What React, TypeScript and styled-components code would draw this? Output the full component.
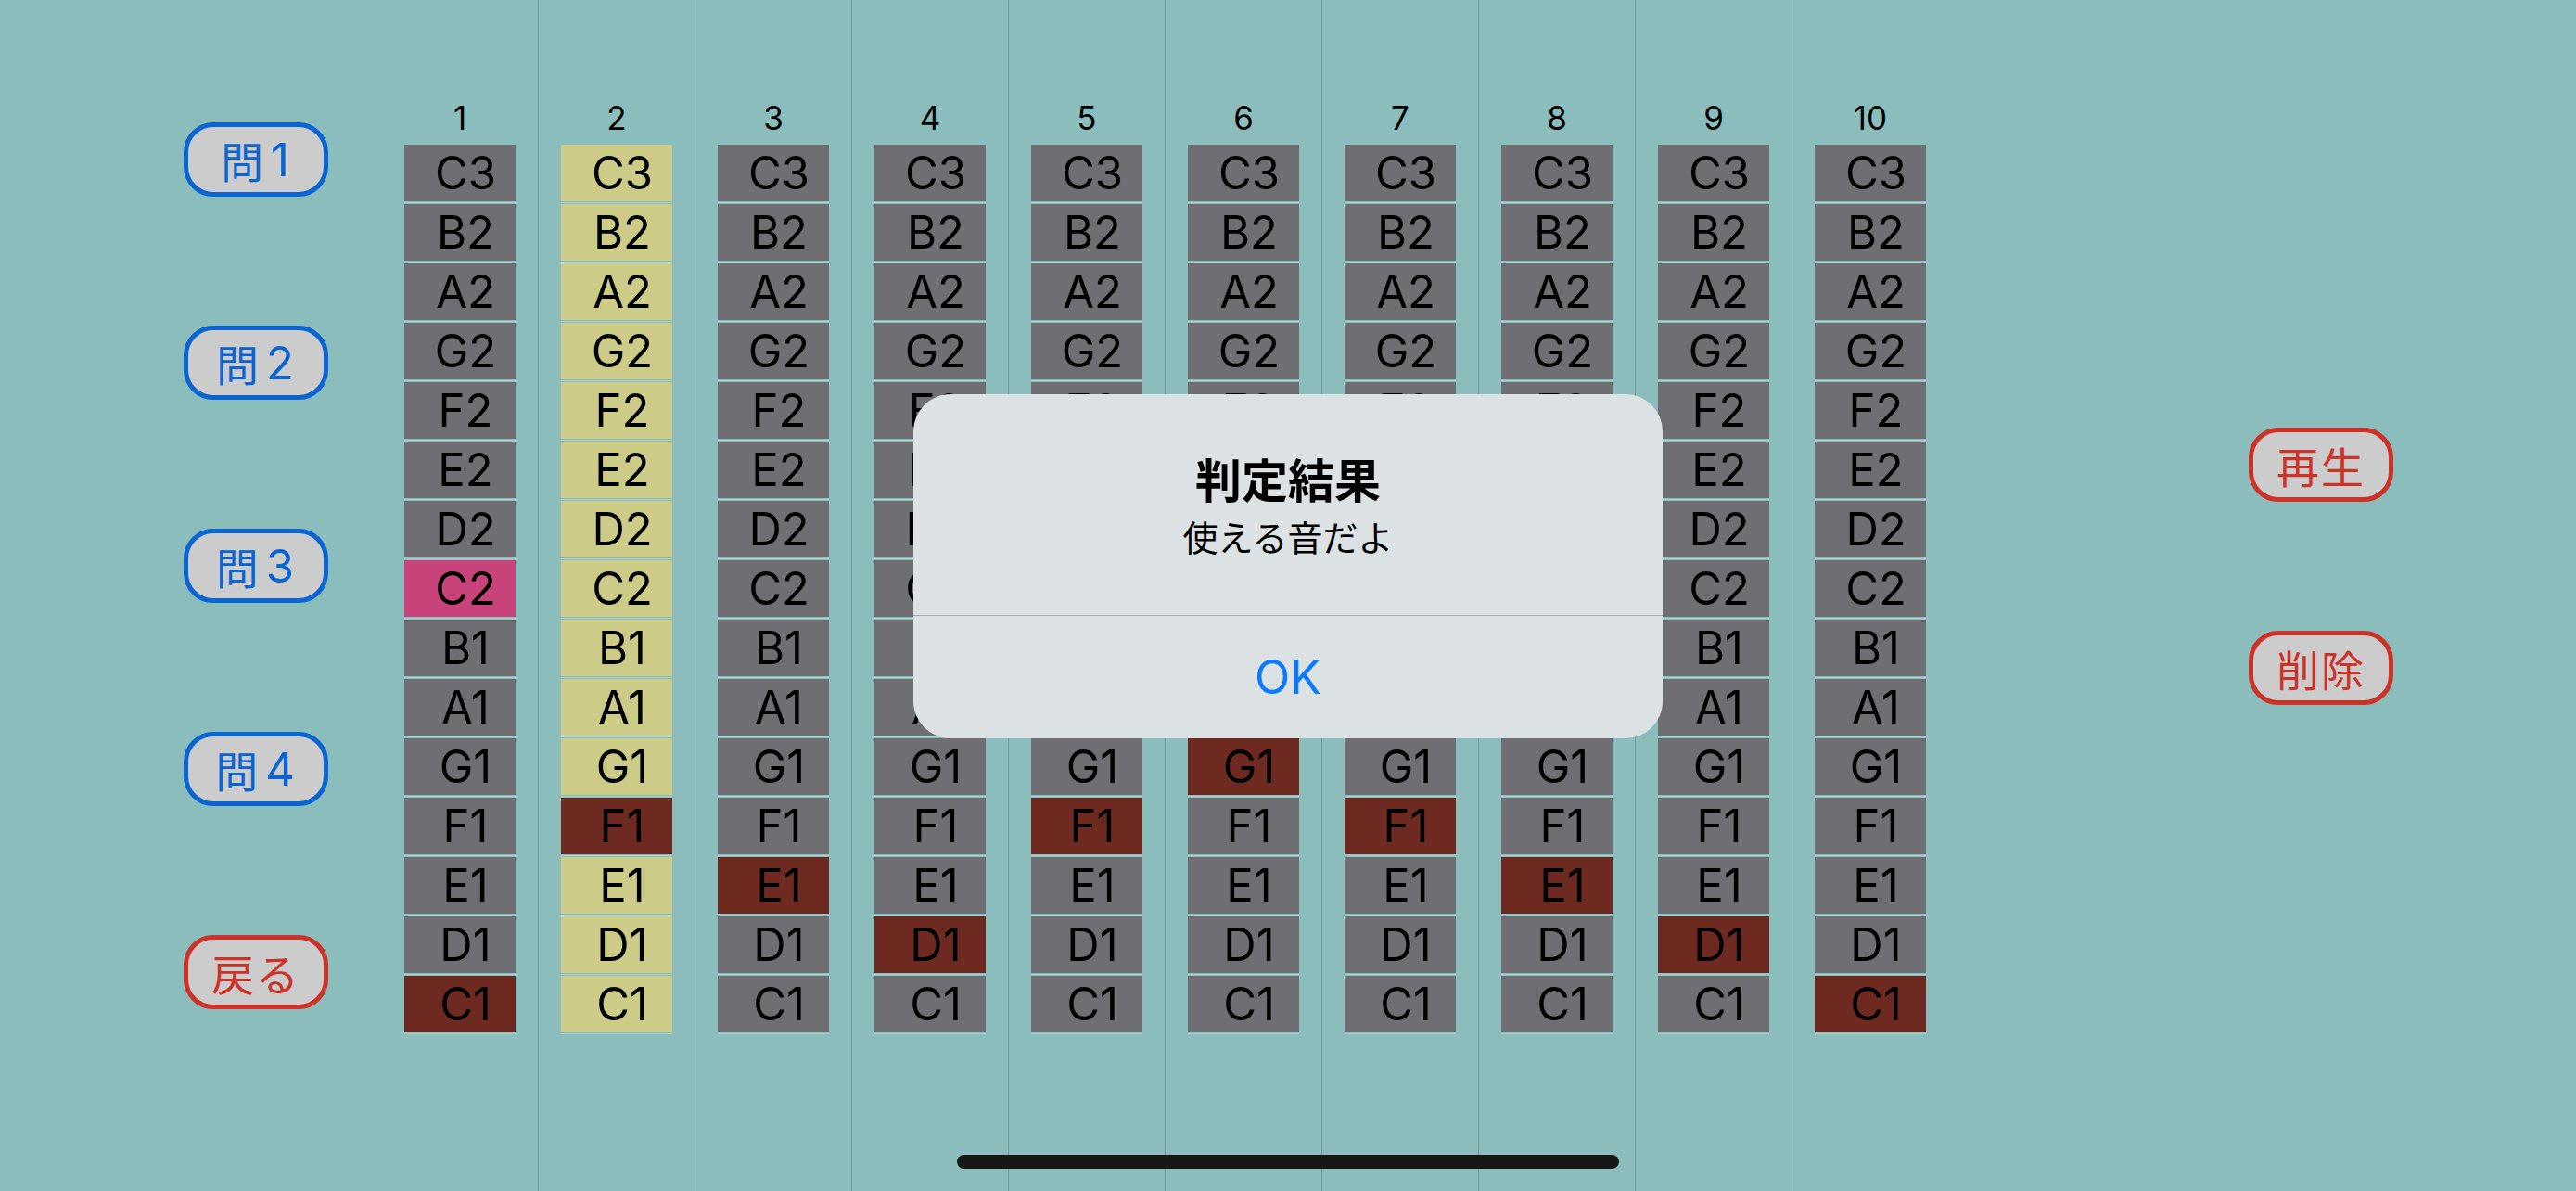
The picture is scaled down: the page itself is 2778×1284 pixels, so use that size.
import React from 'react';
import styled, { createGlobalStyle } from 'styled-components';

const GlobalStyle = createGlobalStyle`
  html, body {
    margin: 0;
    padding: 0;
    background: #8bbdbd;
  }
  body {
    font-family: Inter, "Noto Sans CJK JP", sans-serif;
  }
`;

const NOTES = ['C3', 'B2', 'A2', 'G2', 'F2', 'E2', 'D2', 'C2', 'B1', 'A1', 'G1', 'F1', 'E1', 'D1', 'C1'];

type Tone = 'gray' | 'yellow' | 'red' | 'pink';

interface ColumnData {
  label: string;
  base: Tone;
  marks: Record<string, Tone>;
}

const columns: ColumnData[] = [
  { label: '1', base: 'gray', marks: { C2: 'pink', C1: 'red' } },
  { label: '2', base: 'yellow', marks: { F1: 'red' } },
  { label: '3', base: 'gray', marks: { E1: 'red' } },
  { label: '4', base: 'gray', marks: { D1: 'red' } },
  { label: '5', base: 'gray', marks: { F1: 'red' } },
  { label: '6', base: 'gray', marks: { G1: 'red' } },
  { label: '7', base: 'gray', marks: { F1: 'red' } },
  { label: '8', base: 'gray', marks: { E1: 'red' } },
  { label: '9', base: 'gray', marks: { D1: 'red' } },
  { label: '10', base: 'gray', marks: { C1: 'red' } },
];

const toneColor: Record<Tone, string> = {
  gray: '#6f6e73',
  yellow: '#cccc88',
  red: '#6e2a20',
  pink: '#c8437a',
};

const Screen = styled.div`
  position: relative;
  width: 2778px;
  height: 1284px;
  overflow: hidden;
  display: flex;
  align-items: flex-start;
  background: #8bbdbd;
`;

const SideColumn = styled.div<{ $top: number; $left: number }>`
  display: flex;
  flex-direction: column;
  gap: 139px;
  padding-top: ${({ $top }) => $top}px;
  margin-left: ${({ $left }) => $left}px;
`;

const PillButton = styled.button<{ $tone: 'blue' | 'red' }>`
  box-sizing: border-box;
  width: 156px;
  height: 80px;
  border-radius: 32px;
  border: 5px solid ${({ $tone }) => ($tone === 'blue' ? '#0a64d2' : '#cd3229')};
  background: #cccccc;
  color: ${({ $tone }) => ($tone === 'blue' ? '#0a64d2' : '#cd3229')};
  font-family: "Noto Sans CJK JP", sans-serif;
  font-size: 46px;
  line-height: 1;
  padding: 0;
  display: flex;
  align-items: center;
  justify-content: center;
  letter-spacing: 2px;
`;

const ButtonNumber = styled.span`
  font-family: Inter, sans-serif;
  font-size: 49px;
  margin-left: 6px;
`;

const Board = styled.div`
  display: flex;
  margin-left: 58px;
  height: 1221px;
`;

const Column = styled.div<{ $divider: boolean }>`
  width: 168px;
  height: 100%;
  border-left: ${({ $divider }) => ($divider ? '1px solid #6e9c9e' : 'none')};
  display: flex;
  flex-direction: column;
  align-items: center;
  padding-top: 105px;
  box-sizing: content-box;
`;

const ColumnLabel = styled.div`
  height: 44px;
  line-height: 44px;
  font-family: Inter, sans-serif;
  font-size: 35px;
  color: #000;
  margin-bottom: 7px;
`;

const Slot = styled.div`
  width: 120px;
  height: 64px;
  display: flex;
  flex-direction: column;
  background: linear-gradient(
    to bottom,
    transparent 62px,
    #a9d3d3 62px,
    #a9d3d3 63px,
    transparent 63px
  );
`;

const NoteCell = styled.div<{ $tone: Tone }>`
  height: 61px;
  background: ${({ $tone }) => toneColor[$tone]};
  display: flex;
  align-items: center;
  justify-content: center;
  padding-left: 12px;
  font-family: Inter, sans-serif;
  font-size: 49px;
  color: #000;
`;

const Alert = styled.div`
  position: absolute;
  left: 985px;
  top: 425px;
  width: 808px;
  height: 371px;
  border-radius: 40px;
  background: #dce2e3;
  display: flex;
  flex-direction: column;
  overflow: hidden;
`;

const AlertBody = styled.div`
  height: 239px;
  display: flex;
  flex-direction: column;
  align-items: center;
  padding-top: 60px;
  box-sizing: border-box;
  border-bottom: 1px solid #a7aeaf;
`;

const AlertTitle = styled.div`
  font-family: "Noto Sans CJK JP", sans-serif;
  font-weight: 700;
  font-size: 50px;
  line-height: 60px;
  color: #000;
`;

const AlertMessage = styled.div`
  font-family: "Noto Sans CJK JP", sans-serif;
  font-size: 38px;
  line-height: 48px;
  margin-top: 9px;
  color: #000;
`;

const AlertAction = styled.div`
  flex: 1;
  display: flex;
  align-items: center;
  justify-content: center;
  font-family: Inter, sans-serif;
  font-size: 50px;
  color: #0a7aff;
`;

const HomeIndicator = styled.div`
  position: absolute;
  left: 1032px;
  bottom: 24px;
  width: 714px;
  height: 15px;
  border-radius: 8px;
  background: #161616;
`;

export default function App() {
  return (
    <>
      <GlobalStyle />
      <Screen>
        <SideColumn $top={132} $left={198}>
          {['1', '2', '3', '4'].map((n) => (
            <PillButton key={n} $tone="blue">
              問<ButtonNumber>{n}</ButtonNumber>
            </PillButton>
          ))}
          <PillButton $tone="red">戻る</PillButton>
        </SideColumn>

        <Board>
          {columns.map((col, i) => (
            <Column key={col.label} $divider={i > 0}>
              <ColumnLabel>{col.label}</ColumnLabel>
              {NOTES.map((note) => (
                <Slot key={note}>
                  <NoteCell $tone={col.marks[note] ?? col.base}>{note}</NoteCell>
                </Slot>
              ))}
            </Column>
          ))}
        </Board>

        <SideColumn $top={461} $left={324}>
          <PillButton $tone="red">再生</PillButton>
          <PillButton $tone="red">削除</PillButton>
        </SideColumn>

        <Alert>
          <AlertBody>
            <AlertTitle>判定結果</AlertTitle>
            <AlertMessage>使える音だよ</AlertMessage>
          </AlertBody>
          <AlertAction>OK</AlertAction>
        </Alert>

        <HomeIndicator />
      </Screen>
    </>
  );
}
